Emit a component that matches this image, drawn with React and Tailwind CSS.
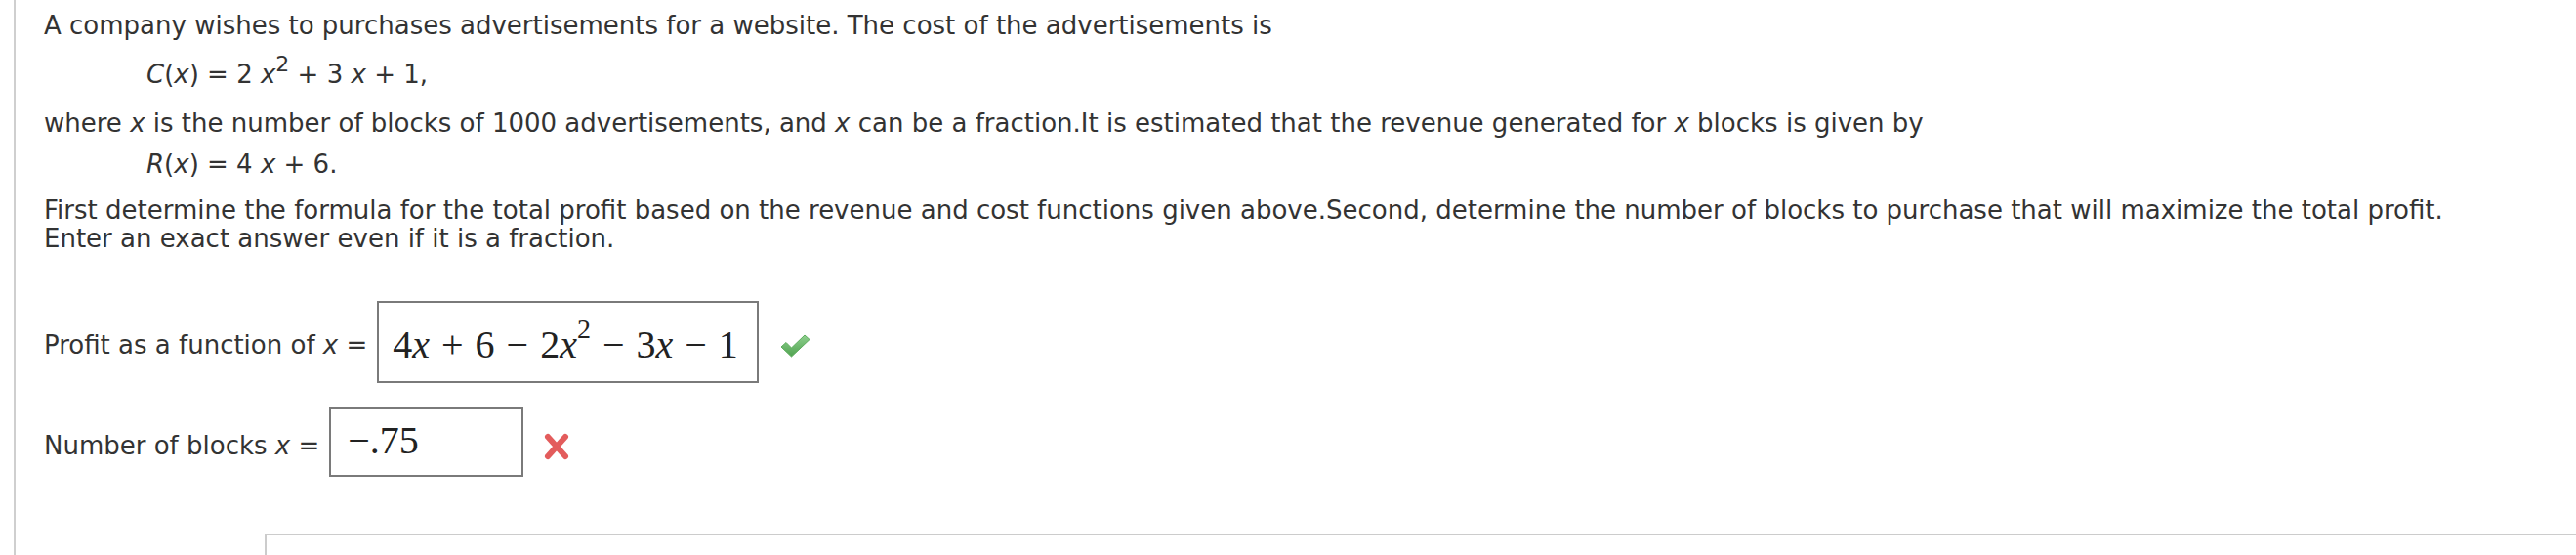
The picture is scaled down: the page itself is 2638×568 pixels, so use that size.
import React from "react";

const MathX = () => <span className="italic">x</span>;

const Op = ({ children }) => <span className="mx-[12px]">{children}</span>;

const CheckMark = () => (
  <svg width="32" height="26" viewBox="0 0 32 26" className="shrink-0">
    <defs>
      <linearGradient id="ok" x1="0" y1="0" x2="0" y2="1">
        <stop offset="0" stopColor="#8fd08f" />
        <stop offset="1" stopColor="#4fa24f" />
      </linearGradient>
    </defs>
    <path
      d="M2 14 L7 9.5 L12.5 15 L26 2 L31 6.5 L12.5 24 Z"
      fill="url(#ok)"
      stroke="#5fae5f"
      strokeWidth="1"
      strokeLinejoin="round"
    />
  </svg>
);

const CrossMark = () => (
  <svg width="28" height="30" viewBox="0 0 28 30" className="shrink-0">
    <g stroke="#e35c5c" strokeWidth="6" strokeLinecap="round">
      <path d="M5 5 L23 25" />
      <path d="M23 5 L5 25" />
    </g>
  </svg>
);

export default function App() {
  return (
    <div className="h-[568px] w-[2638px] overflow-hidden bg-white font-['DejaVu_Sans',sans-serif] text-[26px] leading-[29px] text-[#333]">
      <div className="ml-[14px] h-full border-l-2 border-[#cfcfcf] pl-[29px] pt-[12px]">
        <p>
          A company wishes to purchases advertisements for a website. The cost of the advertisements is
        </p>
        <p className="mt-[21px] pl-[105px]">
          <i>C</i>(<i>x</i>) = 2 <i>x</i>
          <span className="relative -top-[12px] text-[22px] leading-none">2</span> + 3 <i>x</i> + 1,
        </p>
        <p className="mt-[21px]">
          where <i>x</i> is the number of blocks of 1000 advertisements, and <i>x</i> can be a fraction.It is
          estimated that the revenue generated for <i>x</i> blocks is given by
        </p>
        <p className="mt-[13px] pl-[105px]">
          <i>R</i>(<i>x</i>) = 4 <i>x</i> + 6.
        </p>
        <p className="mt-[18px]">
          First determine the formula for the total profit based on the revenue and cost functions given
          above.Second, determine the number of blocks to purchase that will maximize the total profit.
          <br />
          Enter an exact answer even if it is a fraction.
        </p>

        <div className="mt-[49px] flex items-center">
          <span className="mt-[6px]">
            Profit as a function of <i>x</i> =
          </span>
          <div className="ml-[10px] flex h-[84px] w-[391px] items-center border-2 border-[#7a7a7a] pl-[14px] pt-[6px] font-['Liberation_Serif',serif] text-[40px] leading-none text-[#222]">
            <span>4</span>
            <MathX />
            <Op>+</Op>
            <span>6</span>
            <Op>−</Op>
            <span>2</span>
            <MathX />
            <span className="relative -top-[16px] text-[28px]">2</span>
            <Op>−</Op>
            <span>3</span>
            <MathX />
            <Op>−</Op>
            <span>1</span>
          </div>
          <div className="ml-[21px] mt-[8px]">
            <CheckMark />
          </div>
        </div>

        <div className="mt-[25px] flex items-center">
          <span className="mt-[8px]">
            Number of blocks <i>x</i> =
          </span>
          <div className="ml-[10px] flex h-[71px] w-[199px] items-start border-2 border-[#7a7a7a] pl-[17px] pt-[12px] font-['Liberation_Serif',serif] text-[40px] leading-none text-[#222]">
            <span>−.75</span>
          </div>
          <div className="ml-[20px] mt-[8px]">
            <CrossMark />
          </div>
        </div>

        <div className="ml-[226px] mt-[58px] h-[60px] w-[2500px] border-2 border-[#cccccc]" />
      </div>
    </div>
  );
}
